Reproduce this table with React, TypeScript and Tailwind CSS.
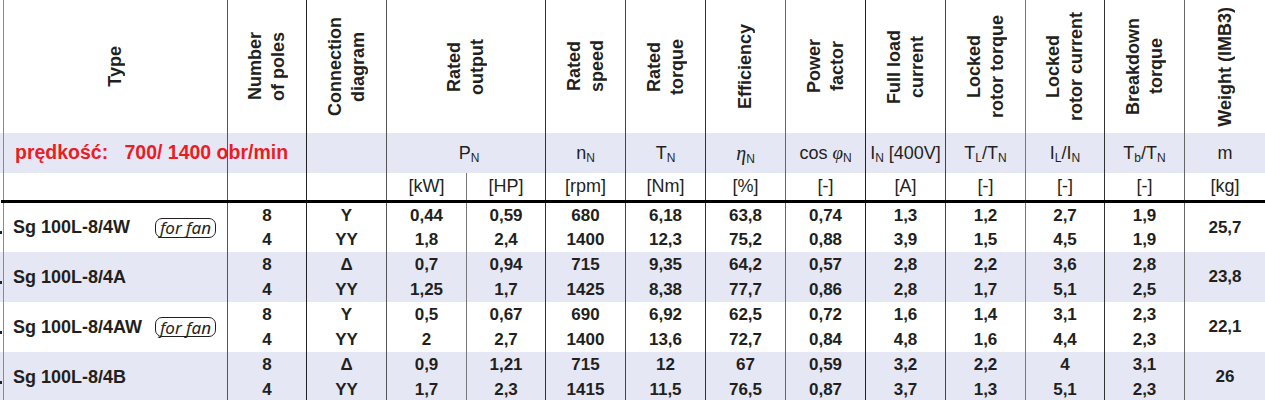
import React from "react";

type Col = { key: string; w: string; line: string };

// widths include the 1px left rule of every cell
const cols: Col[] = [
  { key: "poles", w: "w-[79px]", line: "border-[#555]" },
  { key: "conn", w: "w-[80px]", line: "border-[#222]" },
  { key: "kw", w: "w-[80px]", line: "border-[#555]" },
  { key: "hp", w: "w-[79px]", line: "border-[#777]" },
  { key: "rpm", w: "w-[80px]", line: "border-[#333]" },
  { key: "nm", w: "w-[80px]", line: "border-[#444]" },
  { key: "eff", w: "w-[80px]", line: "border-[#333]" },
  { key: "pf", w: "w-[80px]", line: "border-[#666]" },
  { key: "i", w: "w-[80px]", line: "border-[#222]" },
  { key: "tl", w: "w-[80px]", line: "border-[#444]" },
  { key: "il", w: "w-[79px]", line: "border-[#777]" },
  { key: "tb", w: "w-[80px]", line: "border-[#333]" },
];

const units = ["", "", "[kW]", "[HP]", "[rpm]", "[Nm]", "[%]", "[-]", "[A]", "[-]", "[-]", "[-]"];

type Motor = {
  name: string;
  fan?: boolean;
  values: Record<string, [string, string]>;
  m: string;
};

const motors: Motor[] = [
  {
    name: "Sg 100L-8/4W",
    fan: true,
    values: {
      poles: ["8", "4"], conn: ["Y", "YY"], kw: ["0,44", "1,8"], hp: ["0,59", "2,4"],
      rpm: ["680", "1400"], nm: ["6,18", "12,3"], eff: ["63,8", "75,2"], pf: ["0,74", "0,88"],
      i: ["1,3", "3,9"], tl: ["1,2", "1,5"], il: ["2,7", "4,5"], tb: ["1,9", "1,9"],
    },
    m: "25,7",
  },
  {
    name: "Sg 100L-8/4A",
    values: {
      poles: ["8", "4"], conn: ["Δ", "YY"], kw: ["0,7", "1,25"], hp: ["0,94", "1,7"],
      rpm: ["715", "1425"], nm: ["9,35", "8,38"], eff: ["64,2", "77,7"], pf: ["0,57", "0,86"],
      i: ["2,8", "2,8"], tl: ["2,2", "1,7"], il: ["3,6", "5,1"], tb: ["2,8", "2,5"],
    },
    m: "23,8",
  },
  {
    name: "Sg 100L-8/4AW",
    fan: true,
    values: {
      poles: ["8", "4"], conn: ["Y", "YY"], kw: ["0,5", "2"], hp: ["0,67", "2,7"],
      rpm: ["690", "1400"], nm: ["6,92", "13,6"], eff: ["62,5", "72,7"], pf: ["0,72", "0,84"],
      i: ["1,6", "4,8"], tl: ["1,4", "1,6"], il: ["3,1", "4,4"], tb: ["2,3", "2,3"],
    },
    m: "22,1",
  },
  {
    name: "Sg 100L-8/4B",
    values: {
      poles: ["8", "4"], conn: ["Δ", "YY"], kw: ["0,9", "1,7"], hp: ["1,21", "2,3"],
      rpm: ["715", "1415"], nm: ["12", "11,5"], eff: ["67", "76,5"], pf: ["0,59", "0,87"],
      i: ["3,2", "3,7"], tl: ["2,2", "1,3"], il: ["4", "5,1"], tb: ["3,1", "2,3"],
    },
    m: "26",
  },
];

const Vertical = ({ children }: { children: React.ReactNode }) => (
  <div className="[writing-mode:vertical-rl] rotate-180 text-center font-bold text-[18px] leading-[23px] whitespace-nowrap">
    {children}
  </div>
);

const HeadCell = ({ w, line, children }: { w: string; line: string; children: React.ReactNode }) => (
  <div className={`${w} ${line} border-l h-full flex items-center justify-center shrink-0`}>{children}</div>
);

const Sub = ({ children }: { children: React.ReactNode }) => (
  <sub className="text-[12px]">{children}</sub>
);

const Eta = () => <span className="font-['Liberation_Serif',serif] italic text-[20px]">η</span>;
const Phi = () => <span className="font-['Liberation_Serif',serif] italic text-[19px]">φ</span>;

const FanBadge = () => (
  <span className="w-[61px] h-[20px] rounded-[7px] border border-[#231f20] flex items-center justify-center font-['Noto_Sans',sans-serif] font-normal italic text-[17px] leading-none">
    for fan
  </span>
);

export default function App() {
  const c = (k: string) => cols.find((x) => x.key === k)!;

  return (
    <div className="w-[1265px] h-[400px] overflow-hidden bg-white text-[#231f20] font-['Liberation_Sans',Arial,sans-serif]">
      {/* rotated headings */}
      <div className="flex h-[133px]">
        <div className="w-[3px] shrink-0" />
        <HeadCell w="w-[224px]" line="border-[#8a8a8a]">
          <Vertical>Type</Vertical>
        </HeadCell>
        <HeadCell w={c("poles").w} line={c("poles").line}>
          <Vertical>Number<br />of poles</Vertical>
        </HeadCell>
        <HeadCell w={c("conn").w} line={c("conn").line}>
          <Vertical>Connection<br />diagram</Vertical>
        </HeadCell>
        <HeadCell w="w-[159px]" line={c("kw").line}>
          <Vertical>Rated<br />output</Vertical>
        </HeadCell>
        <HeadCell w={c("rpm").w} line={c("rpm").line}>
          <Vertical>Rated<br />speed</Vertical>
        </HeadCell>
        <HeadCell w={c("nm").w} line={c("nm").line}>
          <Vertical>Rated<br />torque</Vertical>
        </HeadCell>
        <HeadCell w={c("eff").w} line={c("eff").line}>
          <Vertical>Efficiency</Vertical>
        </HeadCell>
        <HeadCell w={c("pf").w} line={c("pf").line}>
          <Vertical>Power<br />factor</Vertical>
        </HeadCell>
        <HeadCell w={c("i").w} line={c("i").line}>
          <Vertical>Full load<br />current</Vertical>
        </HeadCell>
        <HeadCell w={c("tl").w} line={c("tl").line}>
          <Vertical>Locked<br />rotor torque</Vertical>
        </HeadCell>
        <HeadCell w={c("il").w} line={c("il").line}>
          <Vertical>Locked<br />rotor current</Vertical>
        </HeadCell>
        <HeadCell w={c("tb").w} line={c("tb").line}>
          <Vertical>Breakdown<br />torque</Vertical>
        </HeadCell>
        <HeadCell w="w-[81px]" line="border-[#666]">
          <Vertical>Weight (IMB3)</Vertical>
        </HeadCell>
      </div>

      {/* symbols band */}
      <div className="flex h-[40px] bg-[#e6e7f4] text-[18px]">
        <div className="w-[3px] shrink-0" />
        <div className="w-[224px] shrink-0 border-l border-[#8a8a8a] flex items-center pl-[11px]">
          <span className="whitespace-pre font-bold text-[19.5px] text-[#ec1c24]">prędkość:   700/ 1400 obr/min</span>
        </div>
        <HeadCell w={c("poles").w} line={c("poles").line}>{null}</HeadCell>
        <HeadCell w={c("conn").w} line={c("conn").line}>{null}</HeadCell>
        <HeadCell w="w-[159px]" line={c("kw").line}>
          <span className="pl-[6px]">P<Sub>N</Sub></span>
        </HeadCell>
        <HeadCell w={c("rpm").w} line={c("rpm").line}>
          <span>n<Sub>N</Sub></span>
        </HeadCell>
        <HeadCell w={c("nm").w} line={c("nm").line}>
          <span>T<Sub>N</Sub></span>
        </HeadCell>
        <HeadCell w={c("eff").w} line={c("eff").line}>
          <span><Eta /><Sub>N</Sub></span>
        </HeadCell>
        <HeadCell w={c("pf").w} line={c("pf").line}>
          <span>cos <Phi /><Sub>N</Sub></span>
        </HeadCell>
        <HeadCell w={c("i").w} line={c("i").line}>
          <span className="whitespace-nowrap">I<Sub>N</Sub> [400V]</span>
        </HeadCell>
        <HeadCell w={c("tl").w} line={c("tl").line}>
          <span>T<Sub>L</Sub>/T<Sub>N</Sub></span>
        </HeadCell>
        <HeadCell w={c("il").w} line={c("il").line}>
          <span>I<Sub>L</Sub>/I<Sub>N</Sub></span>
        </HeadCell>
        <HeadCell w={c("tb").w} line={c("tb").line}>
          <span>T<Sub>b</Sub>/T<Sub>N</Sub></span>
        </HeadCell>
        <HeadCell w="w-[81px]" line="border-[#666]">
          <span>m</span>
        </HeadCell>
      </div>

      {/* units */}
      <div className="flex h-[27px] text-[18px]">
        <div className="w-[3px] shrink-0" />
        <HeadCell w="w-[224px]" line="border-[#8a8a8a]">{null}</HeadCell>
        {cols.map((col, idx) => (
          <HeadCell key={col.key} w={col.w} line={col.line}>
            <span>{units[idx]}</span>
          </HeadCell>
        ))}
        <HeadCell w="w-[81px]" line="border-[#666]">
          <span>[kg]</span>
        </HeadCell>
      </div>

      <div className="h-[3px] bg-black ml-[1px]" />

      {/* data */}
      {motors.map((m, gi) => (
        <div
          key={m.name}
          className={`flex ${gi === 0 ? "h-[49px]" : "h-[50px]"} ${gi % 2 === 1 ? "bg-[#e6e7f4]" : "bg-white"} font-bold`}
        >
          <div className="w-[3px] shrink-0 flex items-center">
            <span className="mt-[10px] w-[2px] h-[3px] bg-[#231f20]" />
          </div>
          <div className="w-[224px] shrink-0 border-l border-[#8a8a8a] flex items-center pl-[9px]">
            <span className="w-[142px] text-[18px] whitespace-nowrap">{m.name}</span>
            {m.fan && <FanBadge />}
          </div>
          {cols.map((col) => (
            <div key={col.key} className={`${col.w} ${col.line} border-l shrink-0 flex flex-col text-[17px]`}>
              <div className="h-1/2 flex items-center justify-center">{m.values[col.key][0]}</div>
              <div className="h-1/2 flex items-center justify-center">{m.values[col.key][1]}</div>
            </div>
          ))}
          <div className="w-[81px] border-l border-[#666] shrink-0 flex items-center justify-center text-[17px]">
            {m.m}
          </div>
        </div>
      ))}
    </div>
  );
}
